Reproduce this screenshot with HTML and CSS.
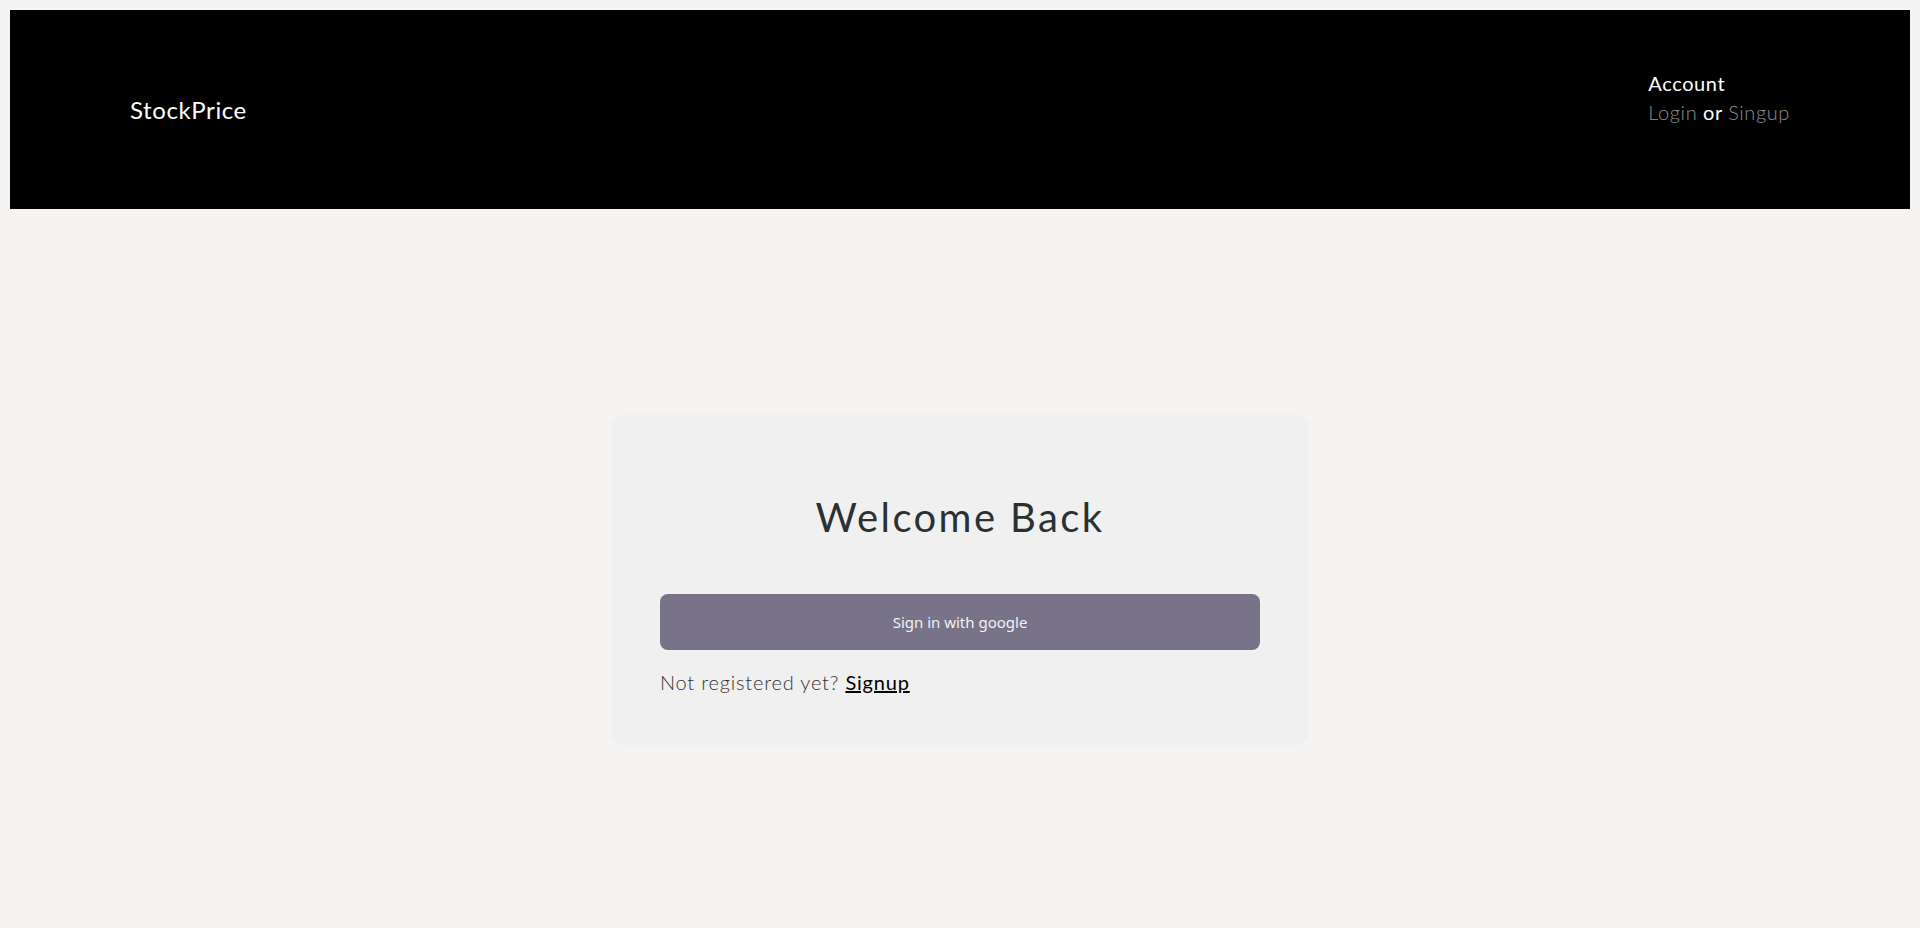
FILE: index.html
```html
<!DOCTYPE html>
<html lang="en">
<head>
    <meta charset="UTF-8">
    <meta name="viewport" content="width=device-width, initial-scale=1.0">
    <title>StockPrice - Login</title>
    <link rel="stylesheet" href="styles.css">
</head>
<body>
    <header class="navbar">
        <a class="brand" href="#">StockPrice</a>
        <div class="account">
            <div class="account-title">Account</div>
            <div class="account-links">
                <a href="#">Login</a> <span class="or">or</span> <a href="#">Singup</a>
            </div>
        </div>
    </header>

    <main class="main">
        <div class="login-card">
            <h1>Welcome Back</h1>
            <button class="google-btn" type="button">Sign in with google</button>
            <p class="register">Not registered yet? <a href="#">Signup</a></p>
        </div>
    </main>
</body>
</html>
```

FILE: styles.css
```css
body {
    margin: 10px;
    background: #f5f4f2;
    font-family: Lato, "Open Sans", sans-serif;
    color: #333;
}
a {
    text-decoration: none;
    color: inherit;
}
.navbar {
    height: 199px;
    padding: 0 120px;
    background: #000;
    color: #fff;
    display: flex;
    justify-content: space-between;
    align-items: center;
}
.brand {
    font-size: 24px;
    letter-spacing: 0.6px;
    color: #fff;
}
.account {
    font-size: 20px;
    line-height: 29px;
    letter-spacing: 0.6px;
    margin-bottom: 23px;
}
.account-links a {
    color: #909090;
    font-weight: 300;
}
.or {
    color: #fff;
}
.main {
    padding-top: 206px;
    display: flex;
    justify-content: center;
}
.login-card {
    width: 600px;
    padding: 48px;
    background: #f0f0f0;
    border-radius: 10px;
}
.login-card h1 {
    margin: 24px 0 47px;
    font-size: 40px;
    line-height: 60px;
    font-weight: 400;
    letter-spacing: 2.4px;
    text-align: center;
    color: #2b3033;
}
.google-btn {
    display: block;
    width: 100%;
    height: 56px;
    border: none;
    border-radius: 8px;
    background: #787389;
    color: #f2f2f2;
    font-family: "Noto Sans", sans-serif;
    font-size: 15px;
    cursor: pointer;
}
.register {
    margin: 17px 0 0;
    font-size: 20px;
    line-height: 30px;
    font-weight: 300;
    letter-spacing: 0.8px;
    color: #333;
}
.register a {
    color: #000;
    font-weight: 400;
    text-decoration: underline;
}
```
